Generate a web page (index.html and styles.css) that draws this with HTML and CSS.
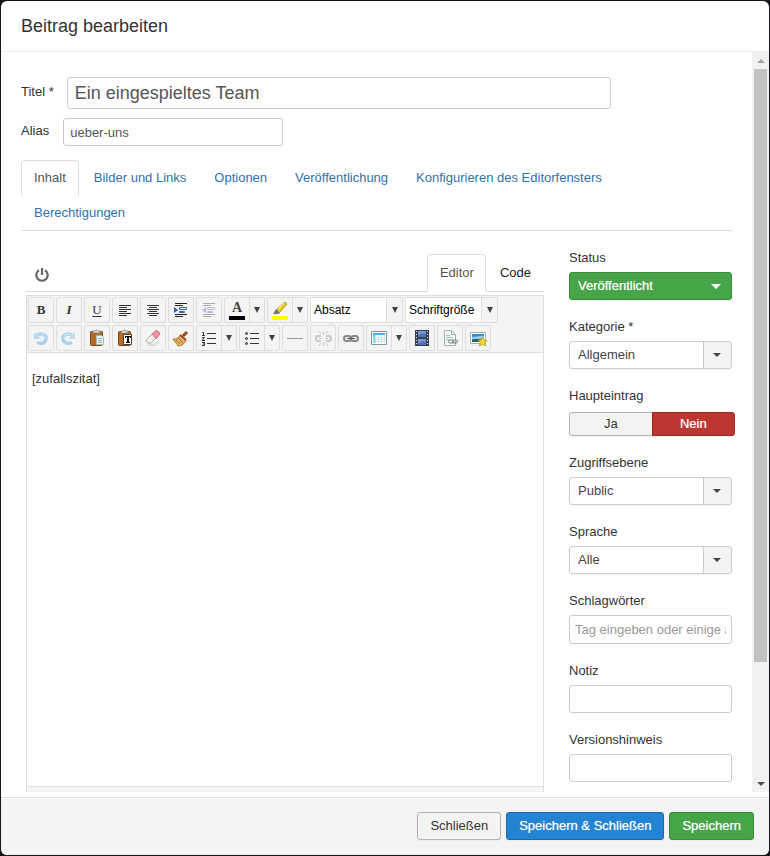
FILE: index.html
```html
<!DOCTYPE html>
<html lang="de">
<head>
<meta charset="utf-8">
<title>Beitrag bearbeiten</title>
<link rel="stylesheet" href="styles.css">
</head>
<body>
<div class="modal" role="dialog" aria-labelledby="modal-title">
  <header class="modal-header"><h1 id="modal-title">Beitrag bearbeiten</h1></header>
  <div class="modal-body">
    <form class="content" id="article">
      <div class="field-row title-row">
        <label for="title">Titel *</label>
        <input id="title" class="title-input" type="text" value="Ein eingespieltes Team">
      </div>
      <div class="field-row alias-row">
        <label for="alias">Alias</label>
        <input id="alias" class="alias-input" type="text" value="ueber-uns">
      </div>
      <nav class="tabs">
        <a class="tab active" href="#inhalt">Inhalt</a>
        <a class="tab" href="#bilder">Bilder und Links</a>
        <a class="tab" href="#optionen">Optionen</a>
        <a class="tab" href="#veroeffentlichung">Veröffentlichung</a>
        <a class="tab" href="#konfiguration">Konfigurieren des Editorfensters</a>
        <a class="tab" href="#berechtigungen">Berechtigungen</a>
      </nav>
      <div class="columns">
        <section class="editor">
          <div class="editor-head">
            <button type="button" class="power" aria-label="Editor umschalten"><svg width="16" height="16" viewBox="0 0 16 16" fill="none" stroke="#666" stroke-width="2.2"><path d="M5 3.2A5.7 5.7 0 1 0 11 3.2M8 1v7"/></svg></button>
            <nav class="editor-tabs">
              <a class="editor-tab active" href="#editor">Editor</a>
              <a class="editor-tab" href="#code">Code</a>
            </nav>
          </div>
          <div class="editor-frame">
            <div class="toolbar">
              <div class="tool-row">
                <button type="button" class="tool letter bold">B</button>
                <button type="button" class="tool letter italic">I</button>
                <button type="button" class="tool letter underline">U</button>
                <button type="button" class="tool" aria-label="Linksbündig"><svg viewBox="0 0 24 24" stroke="#333"><path d="M6 7.5h12M6 9.5h8M6 11.5h12M6 13.5h8M6 15.5h12M6 17.5h8"/></svg></button>
                <button type="button" class="tool" aria-label="Zentriert"><svg viewBox="0 0 24 24" stroke="#333"><path d="M6 7.5h12M8 9.5h8M6 11.5h12M8 13.5h8M6 15.5h12M8 17.5h8"/></svg></button>
                <button type="button" class="tool" aria-label="Einzug vergrößern"><svg viewBox="0 0 24 24" fill="none"><path d="M6 5.500h12M6 7.500h8M6 16.500h12M6 18.500h8" stroke="#222"/><path d="M10.500 9.500h7v2h-7zM10.500 13.500h5v1h-5z" stroke="#3a5fd0"/><path d="M5 9l4 3-4 3z" fill="#245bdc"/></svg></button>
                <button type="button" class="tool faded" aria-label="Einzug verkleinern"><svg viewBox="0 0 24 24" fill="none"><path d="M6 5.500h12M6 7.500h8M6 16.500h12M6 18.500h8" stroke="#222"/><path d="M10.500 9.500h7v2h-7zM10.500 13.500h5v1h-5z" stroke="#3a5fd0"/><path d="M9 9l-4 3 4 3z" fill="#245bdc"/></svg></button>
                <div class="split">
                  <button type="button" class="tool-main ink">A<i class="swatch black"></i></button>
                  <button type="button" class="tool-arrow" aria-label="Textfarbe wählen"></button>
                </div>
                <div class="split">
                  <button type="button" class="tool-main" aria-label="Hervorheben"><svg viewBox="0 0 24 24"><path d="M4 18h16v4H4z" fill="#ff0"/><path d="M8 12l9-8 2 2-8 9z" fill="#e5cc19" stroke="#8e7c12" stroke-width=".7"/><path d="M8 11l4 4-2 1H5z" fill="#777"/><path d="M10 11l7-6" stroke="#fff799"/></svg></button>
                  <button type="button" class="tool-arrow" aria-label="Hintergrundfarbe wählen"></button>
                </div>
                <div class="listbox"><select aria-label="Absatzformat"><option>Absatz</option></select></div>
                <div class="listbox"><select aria-label="Schriftgröße"><option>Schriftgröße</option></select></div>
              </div>
              <div class="tool-row">
                <button type="button" class="tool" aria-label="Rückgängig"><svg viewBox="0 0 24 24" fill="none"><path d="M8 9.500c3-3 9-1 9 3s-4 6-9 4" stroke="#a9d0ed" stroke-width="3.500"/><path d="M5 6v7h7z" fill="#b9dcf4"/><path d="M9 9c3-2 8 0 7 4" stroke="#d8effc"/></svg></button>
                <button type="button" class="tool" aria-label="Wiederholen"><svg viewBox="0 0 24 24" fill="none"><path d="M15 9.500c-3-3-9-1-9 3s4 6 9 4" stroke="#a9d0ed" stroke-width="3.500"/><path d="M18 6v7h-7z" fill="#b9dcf4"/><path d="M14 9c-3-2-8 0-7 4" stroke="#d8effc"/></svg></button>
                <button type="button" class="tool" aria-label="Einfügen"><svg viewBox="0 0 24 24"><rect x="5.500" y="5.500" width="12" height="14" rx="1" fill="#b66a24" stroke="#87410e"/><path d="M8 7V5h2l1-1h1l1 1h2v2z" fill="#ddd" stroke="#777" stroke-width=".7"/><path d="M11.500 9.500h5l2 2v7h-7z" fill="#edf8f5" stroke="#a9bab6"/><path d="M13 12.500h4M13 14.500h4M13 16.500h4" stroke="#87aebb"/></svg></button>
                <button type="button" class="tool" aria-label="Als Text einfügen"><svg viewBox="0 0 24 24"><rect x="5.500" y="5.500" width="12" height="14" rx="1" fill="#b66a24" stroke="#87410e"/><path d="M8 7V5h2l1-1h1l1 1h2v2z" fill="#ddd" stroke="#777" stroke-width=".7"/><path d="M10.500 8.500h8v10h-8z" fill="#fff" stroke="#444"/><path d="M12 10h6v2h-1v-1h-1v5h1v1h-4v-1h1v-5h-1v1h-1z" fill="#000"/></svg></button>
                <button type="button" class="tool" aria-label="Formatierung entfernen"><svg viewBox="0 0 24 24"><path d="M7 19h7l4-4" stroke="#ddd" stroke-width="2" fill="none"/><path d="M5 14l9-9q3-1 5 3l-9 9q-5 1-5-3z" fill="#eee" stroke="#aaa"/><path d="M11 8l3-3q4-1 5 3l-4 5z" fill="#ee91a0" stroke="#d77988"/><path d="M7 13l4 3" stroke="#fff"/></svg></button>
                <button type="button" class="tool" aria-label="Code aufräumen"><svg viewBox="0 0 24 24"><path d="M14 10l4-4" stroke="#8b4d1d" stroke-width="3"/><path d="M4 13c4 1 6-3 8-4l5 5c-1 3-4 6-8 6-1-2-4-5-5-7z" fill="#e3b466" stroke="#a9712e"/><path d="M11 9l6 5" stroke="#a44926" stroke-width="2"/><path d="M7 14l4 4M9 12l5 5" stroke="#9c682a"/></svg></button>
                <div class="split">
                  <button type="button" class="tool-main" aria-label="Nummerierte Liste"><svg viewBox="0 0 24 24" fill="none" stroke="#333"><path d="M10 7.500h9M10 12.500h9M10 17.500h9M5 6.500h1.500V9M5 9.500h3M5 11.500h2.500L5 14.500h3M5 16.500h2.500v3H5M6 18h1.500"/></svg></button>
                  <button type="button" class="tool-arrow" aria-label="Nummerierungsart"></button>
                </div>
                <div class="split">
                  <button type="button" class="tool-main" aria-label="Aufzählung"><svg viewBox="0 0 24 24" stroke="#333"><path d="M10 7.500h9M10 12.500h9M10 17.500h9"/><g fill="#888"><circle cx="6.500" cy="7.500" r="1"/><circle cx="6.500" cy="12.500" r="1"/><circle cx="6.500" cy="17.500" r="1"/></g></svg></button>
                  <button type="button" class="tool-arrow" aria-label="Aufzählungsart"></button>
                </div>
                <button type="button" class="tool" aria-label="Trennlinie"><svg viewBox="0 0 24 24"><path d="M4 12.500h16" stroke="#999"/></svg></button>
                <button type="button" class="tool faded" aria-label="Link entfernen"><svg viewBox="0 0 24 24" fill="none" stroke="#777"><path d="M10 10H7q-2 0-2 2.500T7 15h3M15 10h3q2 0 2 2.500T18 15h-3" stroke-width="2"/><path d="M8 12.500h3M14 12.500h3M12.500 5v4M12.500 16v4M8 5l2 3M17 5l-2 3M8 20l2-3M17 20l-2-3"/></svg></button>
                <button type="button" class="tool" aria-label="Link einfügen"><svg viewBox="0 0 24 24" fill="none" stroke="#888" stroke-width="2"><rect x="5" y="10" width="7" height="5" rx="2.500"/><rect x="12" y="10" width="7" height="5" rx="2.500"/><path d="M8 12.500h8" stroke="#555" stroke-width="1"/></svg></button>
                <div class="split">
                  <button type="button" class="tool-main" aria-label="Tabelle"><svg viewBox="0 0 24 24"><path d="M4.500 5.500h15v13h-15z" fill="#fff" stroke="#789b9b"/><path d="M6 7h12v2H6z" fill="#35b9e5"/><path d="M6 9h2v8H6z" fill="#6fd4ee"/><path d="M8.500 9v8M11.500 9v8M14.500 9v8M17.500 9v8M6 11.500h12M6 13.500h12M6 15.500h12" stroke="#b4dae2" stroke-width=".7"/></svg></button>
                  <button type="button" class="tool-arrow" aria-label="Tabellenoptionen"></button>
                </div>
                <button type="button" class="tool" aria-label="Medien"><svg viewBox="0 0 24 24"><path d="M5 4h14v16H5z" fill="#343e50"/><path d="M8 5h8v6H8zM8 13h8v6H8z" fill="#7798d4"/><path d="M8 9l4-2 4 1v3H8zM8 17l5-2 3 1v3H8z" fill="#4f73b7"/><path d="M6.500 5v14M17.500 5v14" stroke="#ddd" stroke-dasharray="1 2"/></svg></button>
                <button type="button" class="tool" aria-label="Datei"><svg viewBox="0 0 24 24" fill="none"><path d="M6.500 4.500h7l4 4v11h-11z" fill="#f4fbfa" stroke="#9bb3ae"/><path d="M13.500 4.500v4h4" stroke="#9bb3ae"/><path d="M8 9.500h4M8 11.500h7M8 13.500h4" stroke="#9fc5c1"/><g stroke="#777"><rect x="10.500" y="14" width="5" height="3" rx="1.500"/><rect x="14.500" y="14" width="5" height="3" rx="1.500"/></g></svg></button>
                <button type="button" class="tool" aria-label="Bild"><svg viewBox="0 0 24 24"><path d="M4.500 6.500h15v11h-15z" fill="#fff" stroke="#aaa"/><path d="M6 8h12v8H6z" fill="#328bd0"/><path d="M6 11c4 0 7-2 12-1v3H6z" fill="#91cceb"/><path d="M6 14l5-1 7 1v2H6z" fill="#315b56"/><path d="M16.500 11l1.500 3 3 .3-2.200 2.200.7 3.500-3-1.700-3 1.700.7-3.500-2.200-2.200 3-.3z" fill="#f5dc35" stroke="#b39a1d" stroke-width=".8"/></svg></button>
              </div>
            </div>
            <div class="editing-area" contenteditable="true" role="textbox" aria-label="Beitragsinhalt">[zufallszitat]</div>
            <div class="statusbar"></div>
          </div>
        </section>
        <aside class="sidebar">
          <div class="group"><label for="status">Status</label><div class="select success"><select id="status"><option>Veröffentlicht</option></select></div></div>
          <div class="group"><label for="category">Kategorie *</label><div class="select"><select id="category"><option>Allgemein</option></select></div></div>
          <fieldset class="group">
            <legend>Haupteintrag</legend>
            <div class="toggle">
              <input type="radio" name="featured" id="yes"><label for="yes">Ja</label>
              <input type="radio" name="featured" id="no" checked><label for="no">Nein</label>
            </div>
          </fieldset>
          <div class="group"><label for="access">Zugriffsebene</label><div class="select"><select id="access"><option>Public</option></select></div></div>
          <div class="group"><label for="language">Sprache</label><div class="select"><select id="language"><option>Alle</option></select></div></div>
          <div class="group"><label for="tags">Schlagwörter</label><input class="tags" id="tags" type="text" placeholder="Tag eingeben oder einige auswählen"></div>
          <div class="group"><label for="note">Notiz</label><input id="note" type="text"></div>
          <div class="group"><label for="version">Versionshinweis</label><input id="version" type="text"></div>
        </aside>
      </div>
    </form>
    <div class="scrollbar" aria-hidden="true"><span class="scroll-up"></span><span class="track"><span class="thumb"></span></span><span class="scroll-down"></span></div>
  </div>
  <footer class="modal-footer">
    <button type="button" class="btn">Schließen</button>
    <button type="button" class="btn primary">Speichern &amp; Schließen</button>
    <button type="button" class="btn save">Speichern</button>
  </footer>
</div>
</body>
</html>
```
FILE: styles.css
```css
* { box-sizing: border-box; }

body {
  margin: 0;
  padding: 1px;
  height: 100vh;
  background: #17171b;
  color: #333;
  font: 13px/18px "Liberation Sans", Arial, sans-serif;
}

input, select, button { font: inherit; color: inherit; margin: 0; }
a { color: #3071a9; text-decoration: none; }

.modal {
  display: flex;
  flex-direction: column;
  height: 100%;
  overflow: hidden;
  background: #fff;
  border-radius: 6px;
}

.modal-header { padding: 10px 20px; border-bottom: 1px solid #eee; }
.modal-header h1 { margin: 0; font-size: 18px; font-weight: normal; line-height: 30px; }

.modal-body { display: flex; flex: 1; min-height: 0; margin-bottom: 5px; }
.content { flex: 1; min-width: 0; padding: 25px 20px 0; overflow: hidden; }

input[type="text"] {
  width: 100%;
  height: 28px;
  padding: 4px 5px;
  border: 1px solid #ccc;
  border-radius: 3px;
  background: #fff;
  color: #555;
}
input::placeholder { color: #999; opacity: 1; }

.field-row { display: flex; align-items: center; }
.title-row { gap: 13px; margin-bottom: 9px; }
.alias-row { gap: 14px; margin-bottom: 14px; }
.field-row label { padding-bottom: 3px; }
input.title-input { max-width: 544px; height: 32px; padding: 4px 7px; font-size: 18px; }
input.alias-input { width: 220px; padding: 4px 6px; }

.tabs { display: flex; flex-wrap: wrap; gap: 0 2px; border-bottom: 1px solid #ddd; margin-bottom: 18px; }
.tab { padding: 8px 12px; border: 1px solid transparent; border-radius: 4px 4px 0 0; margin-bottom: -1px; }
.tab.active { color: #555; background: #fff; border-color: #ddd #ddd #fff; }

.columns { display: grid; grid-template-columns: minmax(0, 518fr) minmax(0, 163fr); gap: 25px; padding-left: 5px; }

.editor-head { display: flex; justify-content: space-between; align-items: flex-end; padding-top: 5px; margin-bottom: 3px; border-bottom: 1px solid #ddd; }
.power { display: flex; padding: 0 0 8px 8px; border: 0; background: none; }
.editor-tabs { display: flex; gap: 1px; }
.editor-tab { padding: 9px 12px; margin-bottom: -1px; border: 1px solid transparent; border-radius: 4px 4px 0 0; color: #222; }
.editor-tab.active { padding: 9px 11px 9px 12px; color: #555; background: #fff; border-color: #ddd #ddd #fff; }

.editor-frame { border: 1px solid #ddd; }
.toolbar { display: grid; gap: 2px; padding: 1px; background: #f4f4f4; border-bottom: 1px solid #ddd; }
.tool-row { display: flex; gap: 2px; }
.tool, .split, .listbox { height: 26px; border: 1px solid #ddd; border-radius: 2px; background: #f4f4f4; }
.tool { width: 26px; padding: 0; }
.tool svg, .tool-main svg { display: block; width: 24px; height: 24px; }
.letter { font: bold 13px/24px "Liberation Serif", "Times New Roman", serif; color: #333; }
.italic { font-style: italic; }
.underline { font-weight: normal; text-decoration: underline; text-underline-offset: 2px; }
.faded svg { opacity: .35; }
.split { display: flex; width: 41px; }
.tool-main { position: relative; width: 24px; padding: 0; border: 0; background: none; }
.ink { padding-bottom: 4px; font: bold 14px/20px "Liberation Serif", "Times New Roman", serif; color: #444; }
.swatch { position: absolute; left: 4px; bottom: 2px; width: 16px; height: 4px; }
.black { background: #000; }
.tool-arrow { flex: 1; display: grid; place-items: center; padding: 0; border: 0; border-left: 1px solid #ddd; background: none; }
.tool-arrow::before, .listbox::after { content: ""; border: solid transparent; border-width: 6px 3px 0; border-top-color: #444; }
.listbox { display: grid; grid-template-columns: 76px 15px; align-items: center; justify-items: center; width: 93px; }
.listbox select { grid-column: 1; width: 100%; height: 24px; padding: 0 3px; border: 0; border-right: 1px solid #ddd; background: #fff; color: #000; font-size: 12px; appearance: none; }
.editing-area { min-height: 433px; padding: 17px 5px; outline: 0; }
.statusbar { height: 20px; border-top: 1px solid #ddd; background: #f4f4f4; }

.group { margin: 0 0 18px; padding: 0; border: 0; min-width: 0; }
.group > label { display: block; margin-bottom: 5px; }
legend { padding: 0; }
.group input.tags { height: 29px; }
.select { position: relative; height: 28px; border: 1px solid #ccc; border-radius: 3px; background: linear-gradient(to left, #f3f3f3 27px, #ccc 27px, #ccc 28px, #fff 28px); box-shadow: 0 1px 2px rgba(0, 0, 0, .05); }
.select select { display: block; width: 100%; height: 26px; padding: 0 34px 0 8px; border: 0; background: none; color: #444; appearance: none; }
.select::after { content: ""; position: absolute; right: 10px; top: 11px; border: solid transparent; border-width: 4px 4px 0; border-top-color: #444; pointer-events: none; }
.select.success { background: #46a546; border-color: #3b8c3b; }
.select.success select { color: #fff; text-shadow: 0 0 1px rgba(255, 255, 255, .6); }
.select.success::after { border-width: 5px 5px 0; border-top-color: #fff; }

.toggle { display: flex; margin: 7px -3px 0 0; }
.toggle input { position: absolute; opacity: 0; }
.toggle label { flex: 1; height: 24px; line-height: 22px; border: 1px solid #b3b3b3; border-radius: 3px 0 0 3px; background: #f3f3f3; text-align: center; box-shadow: 0 1px 2px rgba(0, 0, 0, .05); }
.toggle label:last-child { border-radius: 0 3px 3px 0; margin-left: -1px; }
.toggle input:checked + label { background: #bd362f; border-color: #942a25; color: #fff; text-shadow: 0 0 1px rgba(255, 255, 255, .6); }

.scrollbar { display: flex; flex-direction: column; width: 17px; padding: 0 2px; background: #f1f1f1; }
.scroll-up, .scroll-down { display: grid; place-items: center; height: 17px; }
.scroll-up::before, .scroll-down::before { content: ""; border: solid transparent; }
.scroll-up::before { border-width: 0 4px 4px; border-bottom-color: #a3a3a3; }
.scroll-down::before { border-width: 4px 4px 0; border-top-color: #505050; }
.track { flex: 1; }
.thumb { display: block; height: 84%; background: #c1c1c1; }

.modal-footer { display: flex; justify-content: flex-end; gap: 5px; padding: 14px 15px 15px; border-top: 1px solid #ddd; background: #f4f4f4; box-shadow: inset 0 1px 0 #fff; }
.btn { height: 28px; padding: 0 12px; border: 1px solid #b3b3b3; border-radius: 3px; background: #f3f3f3; box-shadow: 0 1px 2px rgba(0, 0, 0, .05); }
.primary, .save { color: #fff; text-shadow: 0 0 1px rgba(255, 255, 255, .6); }
.primary { background: #2384d3; border-color: #1a6bad; }
.save { background: #46a546; border-color: #3b8c3b; }
```
